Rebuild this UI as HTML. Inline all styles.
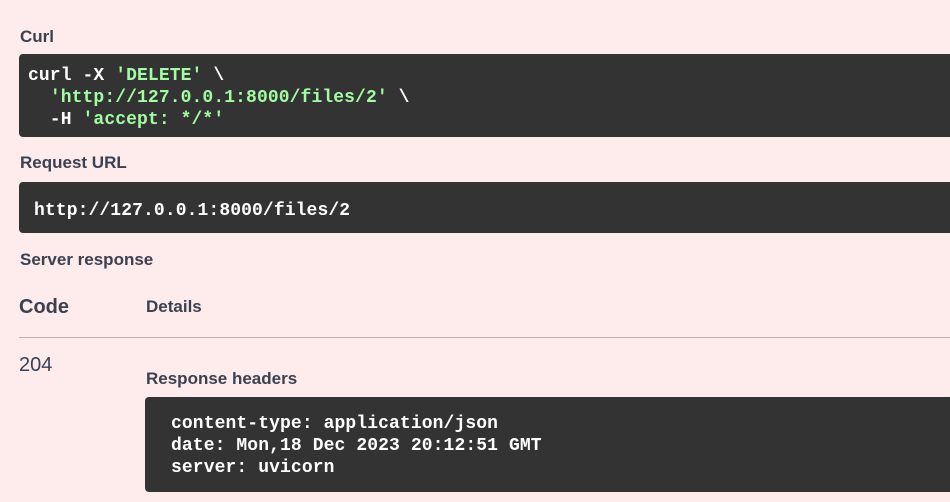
<!DOCTYPE html>
<html><head><style>
body{margin:0;width:950px;height:502px;background:#feebeb;font-family:"Liberation Sans",sans-serif;color:#3b4151;position:relative;overflow:hidden}
.l{position:absolute;font-weight:bold;font-size:17px;line-height:20px}
.b{position:absolute;background:#333;border-radius:4px;color:#fff;font-family:"Liberation Mono",monospace;font-weight:bold;font-size:18px;letter-spacing:0.1px;white-space:pre;line-height:22px}
.g{color:#a2fca2}
</style></head><body>
<div class="l" style="left:20px;top:27px">Curl</div>
<div class="b" style="left:19px;top:54px;width:960px;height:83px"><div style="position:absolute;left:9px;top:11px">curl -X <span class="g">'DELETE'</span> \
  <span class="g">'http://127.0.0.1:8000/files/2'</span> \
  -H <span class="g">'accept: */*'</span></div></div>
<div class="l" style="left:20px;top:153px">Request URL</div>
<div class="b" style="left:19px;top:182px;width:960px;height:51px"><div style="position:absolute;left:15px;top:18px">http://127.0.0.1:8000/files/2</div></div>
<div class="l" style="left:20px;top:250px">Server response</div>
<div class="l" style="left:19px;top:295px;font-size:20px;line-height:24px">Code</div>
<div class="l" style="left:146px;top:297px">Details</div>
<div style="position:absolute;left:19px;top:337px;width:940px;height:1px;background:#b9aeb0"></div>
<div style="position:absolute;left:19px;top:353px;font-size:20px;line-height:24px">204</div>
<div class="l" style="left:146px;top:369px">Response headers</div>
<div class="b" style="left:145px;top:397px;width:820px;height:95px"><div style="position:absolute;left:26px;top:16px">content-type: application/json
date: Mon,18 Dec 2023 20:12:51 GMT
server: uvicorn</div></div>
</body></html>
